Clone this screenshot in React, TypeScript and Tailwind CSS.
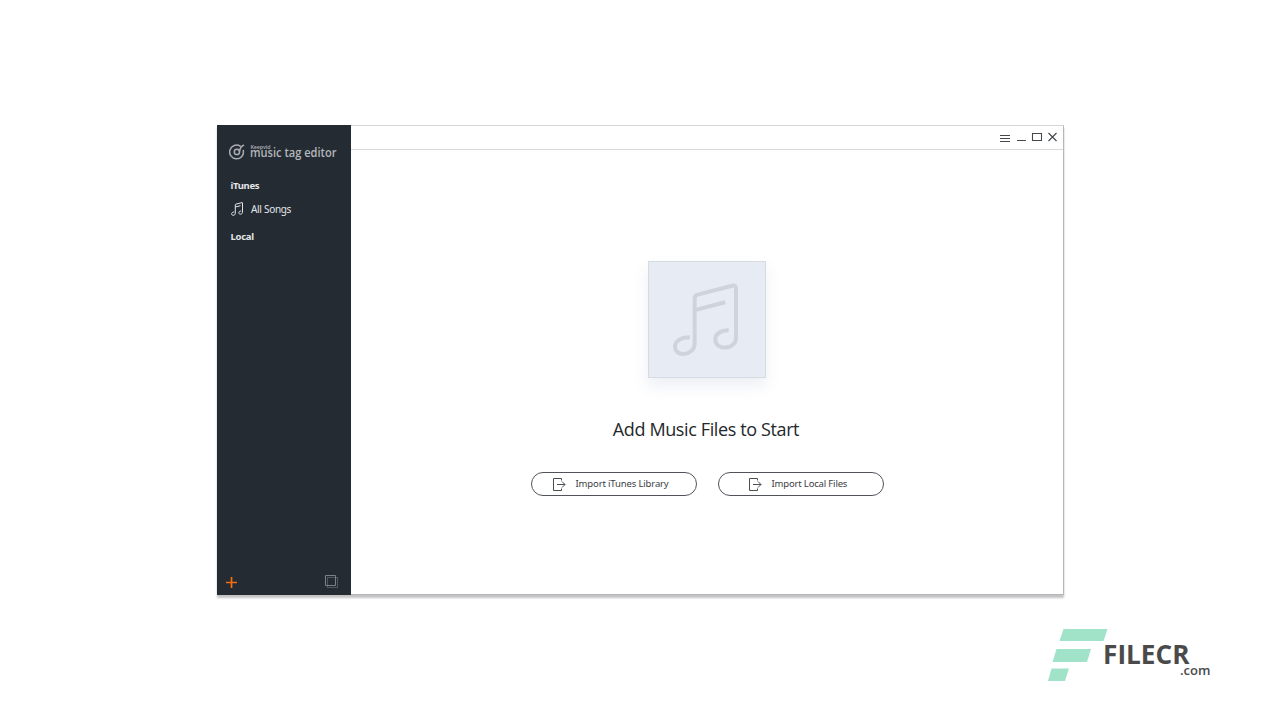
import React from "react";

function NoteIcon() {
  return (
    <svg className="h-[14px] w-[12px]" viewBox="0 0 12 14" fill="none" stroke="currentColor" strokeWidth="1" strokeLinejoin="round">
      <path d="M3.300 10C1.600 10 .6 10.800.6 11.800.6 12.700 1.200 13.300 2.200 13.300 3.500 13.300 4.300 12.400 4.300 11.400V2.800q0-.5.5-.6L11 .6q.5-.1.500.4V10.300C11.500 11.300 10.500 12.200 9.400 12.200 8.500 12.200 7.800 11.600 7.800 10.700 7.800 9.700 8.800 9 10.200 9" />
      <path d="M4.300 5 9.500 3.700" />
    </svg>
  );
}

function AlbumNote() {
  return (
    <svg className="mr-[4px] h-[73px] w-[65px] text-[#ced3dc]" viewBox="0 0 66 74" fill="none" stroke="currentColor" strokeWidth="4" strokeLinejoin="round">
      <path d="M17 55C8 55 2 59 2 64.500 2 69 5 72 10.500 72 17 72 22 67 22 62V15.500q0-3 3-3.700L60 2.700q4-1 4 3V56c0 5-5 9.500-11 9.500-6 0-10-3-10-8.500 0-5.500 5.500-9 13.500-9" />
      <path d="M22 27.500 53 19.500" />
    </svg>
  );
}

function ImportIcon() {
  return (
    <svg className="h-[13px] w-[14px] shrink-0" viewBox="0 0 14 13" fill="none" stroke="#4a4e54" strokeWidth="1">
      <path d="M9.500 2.500V.5H1.500v12h8v-2" />
      <path d="M5 6.500h8M10 3.500l3 3-3 3" />
    </svg>
  );
}

function ImportButton({ label, className }: { label: string; className: string }) {
  return (
    <button className={`flex h-6 w-[166px] items-center gap-[10px] rounded-full border border-[#50545a] bg-white text-[9.5px] whitespace-nowrap text-[#3a3d42] ${className}`}>
      <ImportIcon />
      <span>{label}</span>
    </button>
  );
}

function Sidebar() {
  return (
    <aside className="flex w-[134px] shrink-0 flex-col bg-[#252b33] text-[#e3e5e7]">
      <svg className="mt-[17px] ml-3 h-[20px] w-[112px] shrink-0" viewBox="0 0 112 20">
        <g fill="none" stroke="#a9adb1" strokeWidth="1.500" strokeLinecap="round">
          <path d="M11.200 4.100A6.900 6.900 0 1 0 14.300 8.500" />
          <path d="M14.600 3.300C12.200 4.300 10.900 6.500 10.500 9.500" />
          <circle cx="7.900" cy="9.900" r="2.600" />
        </g>
        <text x="21.500" y="6.500" fill="#a9adb1" fontFamily="'Noto Sans', sans-serif" fontSize="6" fontWeight="600" textLength="20" lengthAdjust="spacingAndGlyphs">Keepvid</text>
        <text x="21" y="15" fill="#b4b7bb" fontFamily="'Open Sans', sans-serif" fontSize="12" fontWeight="600" textLength="86.500" lengthAdjust="spacingAndGlyphs">music tag editor</text>
      </svg>
      <h2 className="mt-[16px] ml-[13.5px] h-4 text-[9.5px] leading-4 font-bold tracking-[-0.3px]">iTunes</h2>
      <div className="mt-[7px] ml-[14px] flex h-4 items-center gap-2 text-[10px] leading-4 tracking-[-0.3px]">
        <NoteIcon />
        <span>All Songs</span>
      </div>
      <h2 className="mt-[12px] ml-[13.5px] h-4 text-[9.5px] leading-4 font-bold tracking-[-0.3px]">Local</h2>
      <div className="mt-auto flex items-center justify-between pr-[13px] pb-[7px] pl-[9px]">
        <svg className="mt-px h-[11px] w-[11px]" viewBox="0 0 11 11" stroke="#f36d12" strokeWidth="1.700">
          <path d="M5.500 0v11M0 5.500h11" />
        </svg>
        <svg className="h-[13px] w-[13px]" viewBox="0 0 13 13" fill="none" stroke="#7c8188">
          <path d="M.5 .5h10v10H.5z" />
          <path d="M2.500 2.500h10v10h-10z" strokeDasharray="1 1" />
        </svg>
      </div>
    </aside>
  );
}

export default function App() {
  return (
    <div className="flex h-[720px] w-[1280px] flex-col bg-white font-['Noto_Sans','Open_Sans',sans-serif]">
      <div className="mt-[125px] ml-[217px] flex h-[470px] w-[847px] shrink-0 shadow-[0_3px_2px_rgba(0,0,0,0.24)]">
        <Sidebar />
        <main className="flex flex-1 flex-col border-t border-r border-b border-t-[#d5d7da] border-r-[#b4b7bb] border-b-[#b4b7bb] bg-white">
          <header className="flex h-6 shrink-0 items-center justify-end border-b border-[#d8dade] pr-[5px]">
            <svg className="mb-px h-[10px] w-[58px]" viewBox="0 0 58 10" fill="none" stroke="#45494e">
              <path d="M0 3.500h10M0 6.500h10M0 9.500h10M17 8.500h9" />
              <path d="M32.500 1.500h9v7h-9z" strokeWidth="1.100" />
              <path d="m48.500 1 8 8M56.500 1l-8 8" strokeWidth="1.200" />
            </svg>
          </header>
          <section className="flex flex-1 flex-col items-center">
            <div className="mt-[111px] flex h-[117px] w-[118px] items-center justify-center border border-[#d6dae1] bg-[#e7ebf3] shadow-[0_8px_14px_rgba(80,100,150,0.1)]">
              <AlbumNote />
            </div>
            <h1 className="mt-[37px] mr-[2px] font-['Open_Sans',sans-serif] text-[18px] leading-7 tracking-[-0.38px] text-[#25272a]">Add Music Files to Start</h1>
            <div className="mt-[29px] flex gap-[21px]">
              <ImportButton label="Import iTunes Library" className="pl-[20px] tracking-[-0.14px]" />
              <ImportButton label="Import Local Files" className="pl-[29px] tracking-[-0.17px]" />
            </div>
          </section>
        </main>
      </div>
      <footer className="mt-[34px] mr-[69px] flex justify-end">
        <svg className="h-[54px] w-[164px]" viewBox="0 0 164 54">
          <g fill="#a1e3c9">
            <path d="M16.500 0h44l-4 12H12.500z" />
            <path d="M9.500 20h34.500l-4 13H5.500z" />
            <path d="M4.500 39.500H22L18 52H1z" />
          </g>
          <g fill="#4a4a4a" fontFamily="'Open Sans', sans-serif" fontWeight="700">
            <text x="56" y="35" fontSize="27.500" textLength="86.500" lengthAdjust="spacingAndGlyphs">FILECR</text>
            <text x="133" y="46" fontSize="13" fontWeight="600" textLength="30.500" lengthAdjust="spacingAndGlyphs">.com</text>
          </g>
        </svg>
      </footer>
    </div>
  );
}
